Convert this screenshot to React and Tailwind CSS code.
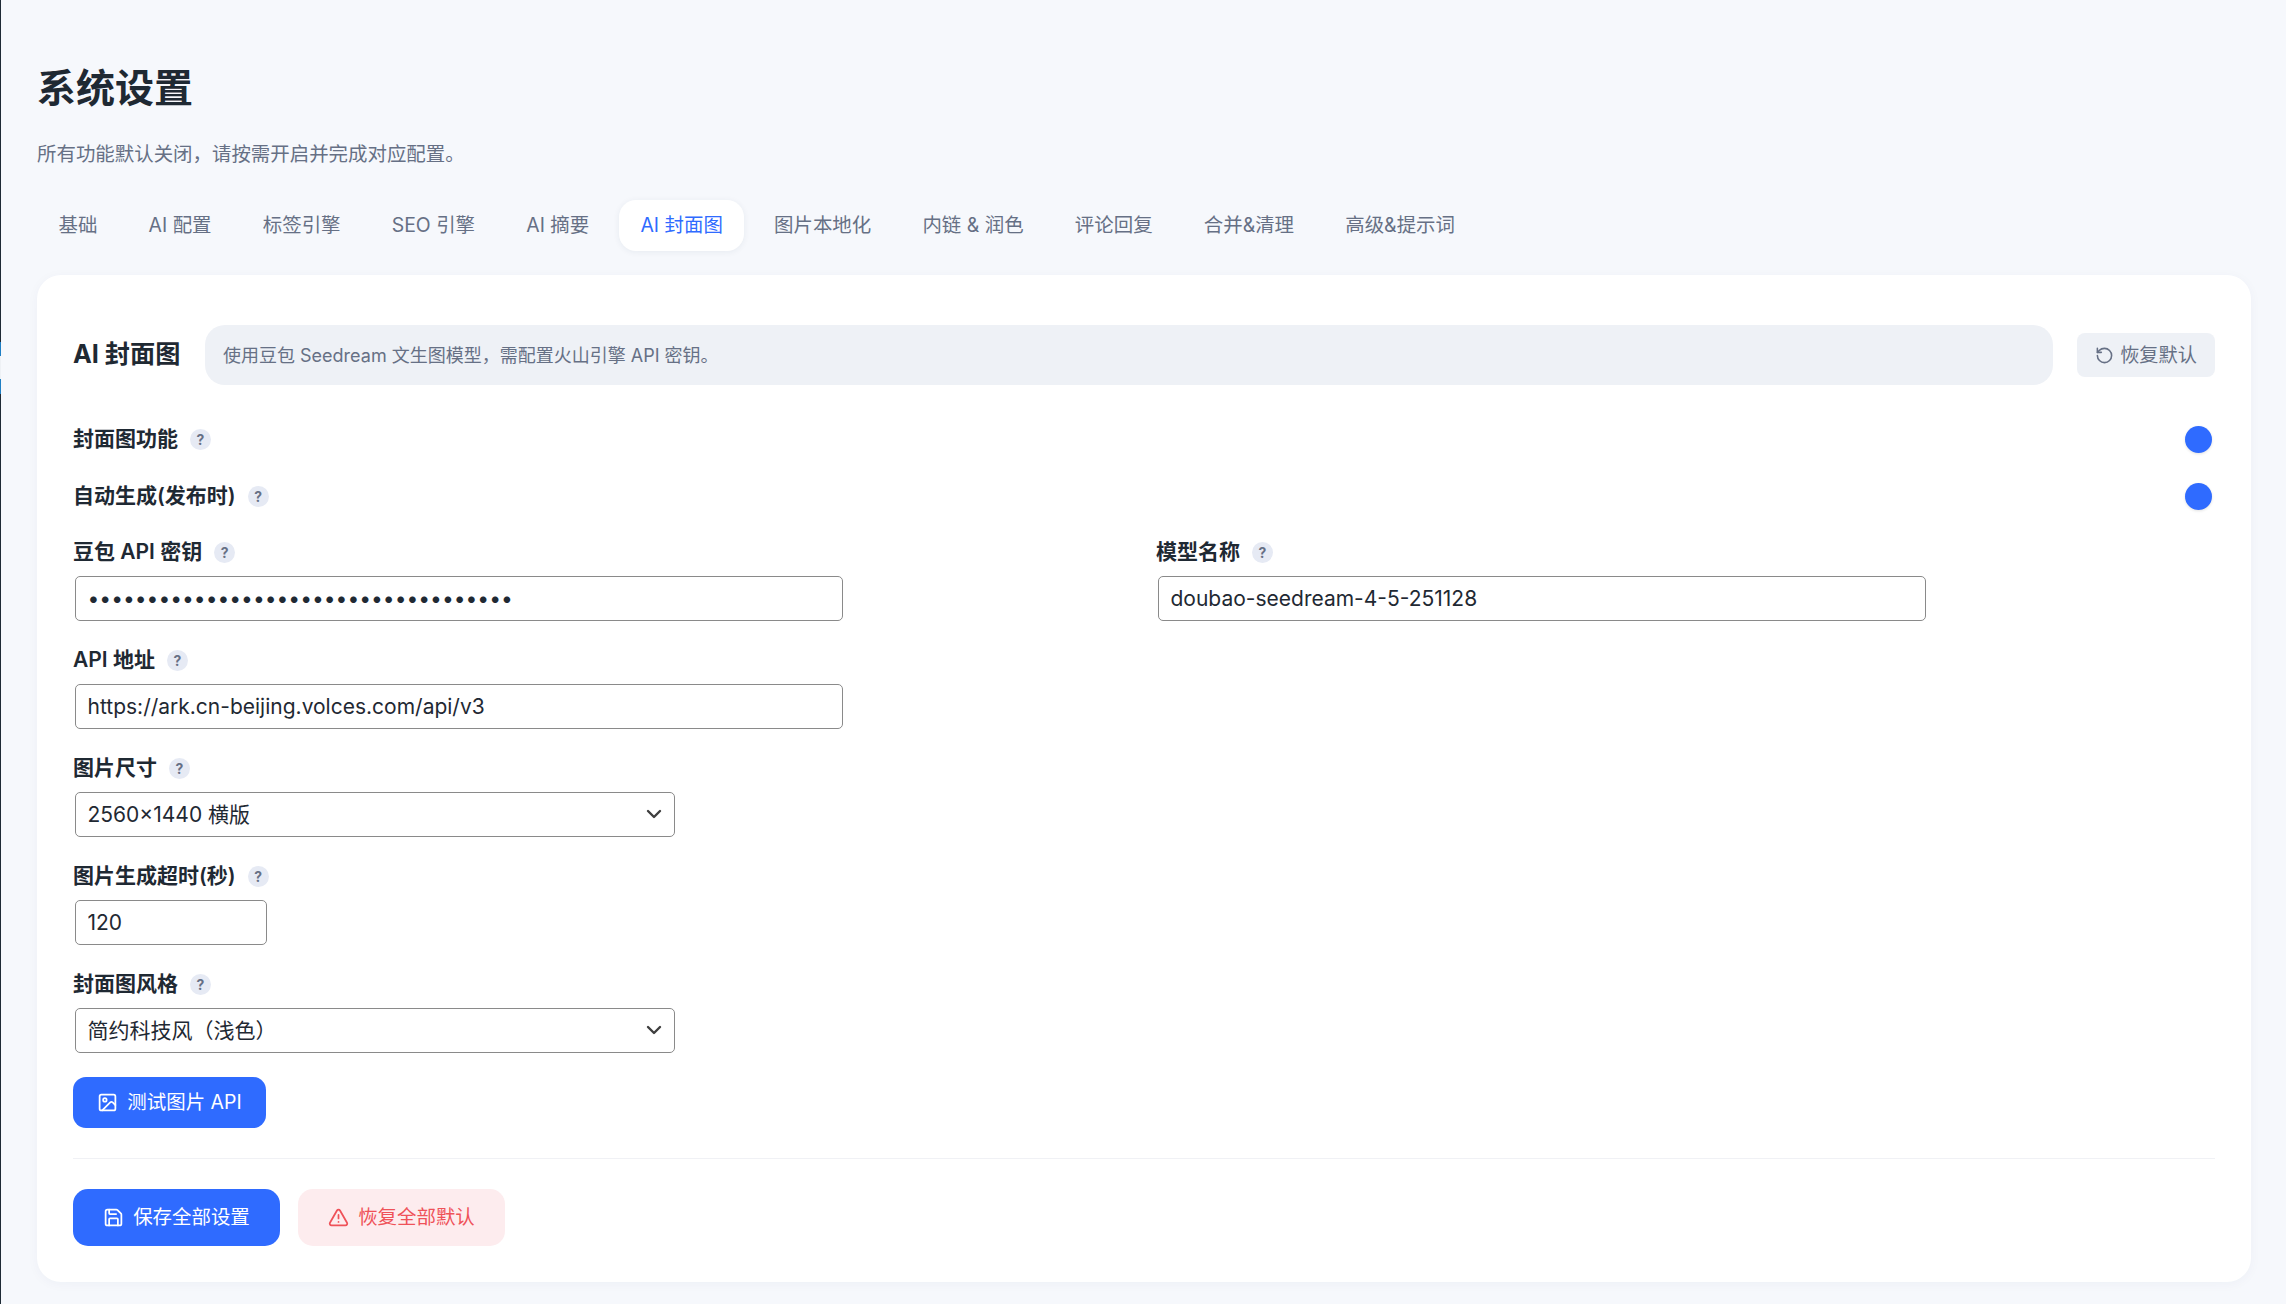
import { ChevronDown, Image, RotateCcw, Save, TriangleAlert } from "lucide-react";

const tabs = ["基础", "AI 配置", "标签引擎", "SEO 引擎", "AI 摘要", "AI 封面图", "图片本地化", "内链 & 润色", "评论回复", "合并&清理", "高级&提示词"];

function Label({ children }) {
  return (
    <div className="flex items-center gap-[12px] h-[30px] text-[21px] font-semibold text-[#1f2933]">
      <span>{children}</span>
      <span className="w-[21px] h-[21px] rounded-full bg-[#e6eaf4] text-[#667085] text-[14px] font-bold flex items-center justify-center">?</span>
    </div>
  );
}

function Field({ label, children }) {
  return (
    <div className="flex flex-col gap-[9px]">
      <Label>{label}</Label>
      {children}
    </div>
  );
}

function TextInput({ value, type = "text", width = "w-[768px]" }) {
  return (
    <input
      type={type}
      value={value}
      readOnly
      className={`${width} h-[45px] ml-[1.5px] px-[12px] border border-[#8a8a8a] rounded-[5px] bg-white text-[21px] text-[#1f2933] outline-none`}
    />
  );
}

function SelectBox({ value }) {
  return (
    <div className="relative w-[600px] ml-[1.5px]">
      <select
        value={value}
        onChange={() => {}}
        className="w-full h-[45px] px-[12px] border border-[#8a8a8a] rounded-[5px] bg-white text-[21px] text-[#1f2933] appearance-none outline-none"
      >
        <option>{value}</option>
      </select>
      <ChevronDown size={24} strokeWidth={2.4} className="absolute right-[9px] top-[10px] text-[#3f3f3f] pointer-events-none" />
    </div>
  );
}

export default function App() {
  return (
    <div className="flex min-h-screen bg-[#f6f8fc] font-['Inter','Noto_Sans_CJK_SC',sans-serif]">
      {/* sidebar edge */}
      <div className="w-px shrink-0 flex flex-col bg-[#1e2a35]">
        <div className="h-[342px]" />
        <div className="h-[14px] bg-[#1f7fc4]" />
        <div className="h-[23px] bg-[#eef1f5]" />
        <div className="h-[15px] bg-[#1f7fc4]" />
      </div>

      <div className="flex-1 min-w-0 pt-[65px] pl-[36px] pr-[35px] pb-[21px]">
        <h1 className="text-[39px] leading-[46px] font-bold text-[#1f2933]">系统设置</h1>
        <p className="mt-[28px] text-[19.44px] leading-[30px] text-[#667085]">所有功能默认关闭，请按需开启并完成对应配置。</p>

        <div className="mt-[31px] ml-[0.5px] flex gap-[9.2px]">
          {tabs.map((t) => (
            <div
              key={t}
              className={
                t === "AI 封面图"
                  ? "h-[51px] px-[21px] flex items-center rounded-[17px] bg-white text-[19.44px] text-[#2f6bff] shadow-[0_1px_6px_rgba(30,50,90,0.07)]"
                  : "h-[51px] px-[21px] flex items-center rounded-[17px] text-[19.44px] text-[#667085]"
              }
            >
              {t}
            </div>
          ))}
        </div>

        <div className="mt-[24px] bg-white rounded-[24px] pt-[50px] px-[36px] pb-[36px] shadow-[0_2px_12px_rgba(30,50,90,0.04)]">
          <div className="flex items-center">
            <h2 className="w-[132px] shrink-0 text-[25.2px] font-bold text-[#1f2933]">AI 封面图</h2>
            <div className="flex-1 h-[60px] flex items-center px-[18px] rounded-[20px] bg-[#eef1f6] text-[18px] text-[#667085]">
              使用豆包 Seedream 文生图模型，需配置火山引擎 API 密钥。
            </div>
            <button className="ml-[24px] w-[138px] h-[44px] flex items-center justify-center gap-[6px] rounded-[8px] bg-[#eef1f6] text-[19.2px] text-[#667085]">
              <RotateCcw size={19} strokeWidth={2} />
              恢复默认
            </button>
          </div>

          <div className="mt-[39px] flex items-center justify-between pr-[3px]">
            <Label>封面图功能</Label>
            <span className="w-[27px] h-[27px] rounded-full bg-[#2f6bff] shadow-[0_1px_3px_rgba(0,0,0,0.12)]" />
          </div>
          <div className="mt-[27px] flex items-center justify-between pr-[3px]">
            <Label>自动生成(发布时)</Label>
            <span className="w-[27px] h-[27px] rounded-full bg-[#2f6bff] shadow-[0_1px_3px_rgba(0,0,0,0.12)]" />
          </div>

          <div className="mt-[26px] flex flex-col gap-[24px]">
            <div className="grid grid-cols-2 gap-x-[24px]">
              <Field label="豆包 API 密钥">
                <TextInput type="password" value="sk-aaaaaaaaaaaaaaaaaaaaaaaaaaaaaaaaa" />
              </Field>
              <Field label="模型名称">
                <TextInput value="doubao-seedream-4-5-251128" />
              </Field>
            </div>
            <Field label="API 地址">
              <TextInput value="https://ark.cn-beijing.volces.com/api/v3" />
            </Field>
            <Field label="图片尺寸">
              <SelectBox value="2560×1440 横版" />
            </Field>
            <Field label="图片生成超时(秒)">
              <TextInput value="120" width="w-[192px]" />
            </Field>
            <Field label="封面图风格">
              <SelectBox value="简约科技风（浅色）" />
            </Field>
          </div>

          <button className="mt-[24px] w-[193px] h-[51px] flex items-center justify-center gap-[9px] rounded-[13px] bg-[#2f6bff] text-[19.44px] text-white">
            <Image size={21} strokeWidth={2} />
            测试图片 API
          </button>

          <div className="mt-[30px] border-t border-[#f0f1f5]" />

          <div className="mt-[30px] flex gap-[18px]">
            <button className="w-[207px] h-[57px] flex items-center justify-center gap-[9px] rounded-[15px] bg-[#2f6bff] text-[19.44px] text-white">
              <Save size={21} strokeWidth={2} />
              保存全部设置
            </button>
            <button className="w-[207px] h-[57px] flex items-center justify-center gap-[9px] rounded-[15px] bg-[#fdecee] text-[19.44px] text-[#ef5259]">
              <TriangleAlert size={21} strokeWidth={2} />
              恢复全部默认
            </button>
          </div>
        </div>
      </div>
    </div>
  );
}
